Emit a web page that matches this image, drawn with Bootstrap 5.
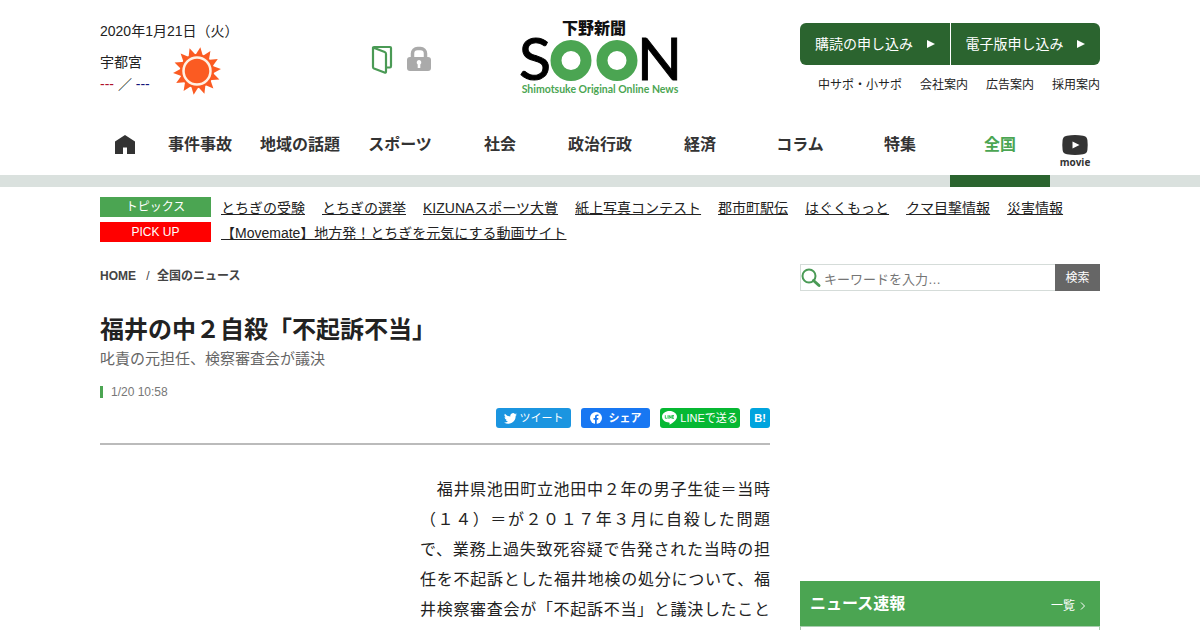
<!DOCTYPE html>
<html lang="ja">
<head>
<meta charset="utf-8">
<meta name="viewport" content="width=device-width, initial-scale=1">
<title>福井の中２自殺「不起訴不当」｜下野新聞 SOON</title>
<link href="https://cdn.jsdelivr.net/npm/bootstrap@5.3.0/dist/css/bootstrap.min.css" rel="stylesheet">
<style>
  body { font-family: "Liberation Sans", "Noto Sans CJK JP", sans-serif; font-size: 14px; line-height: 20px; color: #222; }
  a { color: inherit; }
  svg { display: block; overflow: visible; }
  .page-wrap { max-width: 1000px; margin-inline: auto; }
  .fs-12 { font-size: 12px; }
  .top-grid { display: grid; grid-template-columns: 1fr auto 1fr; padding-top: 21px; min-height: 120px; }
  .weather { margin-top: 5px; gap: 22px; }
  .weather .place { line-height: 22px; padding-top: 5px; }
  .hi { color: #b0122b; } .lo { color: #14147a; }
  .tool-icons { gap: 14px; margin: 24px 89px 0 0; }
  .apply { width: 300px; border-radius: 6px; overflow: hidden; background: #2b642f; margin-top: 2px; }
  .apply a { flex: 1 1 0; height: 42px; color: #fff; padding: 0 15px; }
  .apply a:first-child { border-right: 1px solid #fff; }
  .sub-links { gap: 18px; margin-top: 10px; }
  .gnav { border-bottom: 12px solid #dae1de; }
  .gnav-row a { height: 67px; margin-bottom: -12px; padding-top: 15px; font-size: 16px; font-weight: 700; text-align: center; color: #333; text-decoration: none; flex: 2 1 0; }
  .gnav-row .side { flex: 1 1 0; display: flex; flex-direction: column; align-items: center; }
  .gnav-row .current { color: #4ba552; border-bottom: 12px solid #2b642f; }
  .gnav-row .movie { font: 700 10px/12px "Open Sans", sans-serif; gap: 1px; }
  .topics { padding-top: 10px; }
  .topic-row { gap: 10px; }
  .topic-tag { width: 111px; font-size: 12px; line-height: 19px; padding-top: 1px; text-align: center; color: #fff; background: #4ba552; flex: none; align-self: flex-start; }
  .topic-tag.pick { background: #f00; }
  .topic-links { column-gap: 17px; padding-top: 1px; }
  .main-grid { display: grid; grid-template-columns: minmax(0, 1fr) 300px; column-gap: 30px; margin-top: 21px; }
  .crumbs { font-size: 12px; line-height: 24px; font-weight: 700; color: #444; }
  .crumbs span { padding: 0 4px 0 7px; }
  h1 { font-size: 24px; line-height: 30px; font-weight: 700; margin: 27px 0 0; }
  .deck { font-size: 15px; line-height: 28px; color: #666; margin: 0; }
  .stamp { font-size: 12px; line-height: 12px; color: #777; border-left: 3px solid #4ba552; padding-left: 8px; margin-top: 13px; }
  .shares { gap: 10px; margin-top: 10px; padding-bottom: 15px; border-bottom: 2px solid #bbb; }
  .shares button { height: 20px; border: 0; border-radius: 3px; color: #fff; font-size: 11px; line-height: 20px; padding: 0; display: flex; align-items: center; justify-content: center; gap: 3px; }
  .tw { width: 75px; background: #1b95e0; } .fb { width: 69px; background: #1877f2; font-weight: 700; }
  .ln { width: 80px; background: #06b833; } .hb { width: 20px; background: #00a4de; }
  .story { margin: 30px 0 0 320px; font-size: 16px; line-height: 30px; text-align: justify; text-align-last: justify; }
  .search { height: 27px; }
  .search-box { border: 1px solid #d5dcd9; border-right: 0; gap: 3px; }
  .search input { border: 0; outline: 0; padding: 4px 0 0; font-size: 13px; min-width: 0; }
  .search input::placeholder { color: #757575; }
  .search button { width: 45px; border: 0; padding: 0; background: #666; color: #fff; font-size: 12px; }
  .ad-slot { min-height: 290px; }
  .flash-head { background: #4ba552; color: #fff; height: 45px; padding: 0 14px 0 10px; }
  .flash-head h2 { font-size: 16px; line-height: 20px; font-weight: 700; margin: 0; }
  .flash-body { border: 1px solid #a9cdb0; border-bottom: 0; height: 4px; }
</style>
</head>
<body>
<header>
  <div class="page-wrap top-grid">
    <div class="d-flex justify-content-between align-items-start">
      <div>
        <div>2020年1月21日（火）</div>
        <div class="weather d-flex">
          <div class="place">宇都宮<br><span class="hi">---</span> ／ <span class="lo">---</span></div>
          <svg width="50" height="50" viewBox="0 0 50 50" fill="#fb5b22" role="img" aria-label="晴れ">
            <defs><path id="ray" d="M25 1l4.500 10h-9z"/></defs>
            <circle cx="25" cy="25" r="17"/>
            <use href="#ray" transform="rotate(8 25 25)"/><use href="#ray" transform="rotate(34 25 25)"/><use href="#ray" transform="rotate(60 25 25)"/><use href="#ray" transform="rotate(85 25 25)"/><use href="#ray" transform="rotate(111 25 25)"/><use href="#ray" transform="rotate(137 25 25)"/><use href="#ray" transform="rotate(162 25 25)"/><use href="#ray" transform="rotate(188 25 25)"/><use href="#ray" transform="rotate(214 25 25)"/><use href="#ray" transform="rotate(240 25 25)"/><use href="#ray" transform="rotate(265 25 25)"/><use href="#ray" transform="rotate(291 25 25)"/><use href="#ray" transform="rotate(317 25 25)"/><use href="#ray" transform="rotate(342 25 25)"/>
            <circle cx="25" cy="25" r="13.500" stroke="#fff1e4" stroke-width="2.500"/>
          </svg>
        </div>
      </div>
      <div class="tool-icons d-flex">
        <a href="#" aria-label="紙面"><svg width="22" height="30" viewBox="0 0 22 30" fill="none" stroke="#4a9a55" stroke-width="2.200" stroke-linejoin="round"><path d="M2 2.500Q2 2 3 2h16q1 0 1 1v18q0 1.500-1 1.500h-4M2 2.500V22q0 1 1 1.500l10.500 4q1.500.5 1.500-1V9q0-1.500-1.300-2L2 2.500"/></svg></a>
        <a href="#" aria-label="ログイン"><svg width="24" height="26" viewBox="0 0 24 26"><path d="M5.500 13V8.500a5 5 0 0 1 5-5h3a5 5 0 0 1 5 5V13" fill="none" stroke="#aaa" stroke-width="3.500"/><rect y="12" width="24" height="14" rx="3" fill="#aaa"/><path fill="#fff" d="M12 15a2.500 2.500 0 0 1 1.300 4.500V23h-2.600v-3.500A2.500 2.500 0 0 1 12 15z"/></svg></a>
      </div>
    </div>
    <a href="#" aria-label="下野新聞 SOON">
      <svg width="160" height="78" viewBox="0 0 160 78">
        <text x="74" y="13" text-anchor="middle" font-family="Noto Sans CJK JP" font-weight="900" font-size="16" fill="#111">下野新聞</text>
        <text x="-1" y="59" font-family="Lato" font-size="59" font-weight="400" stroke="#000" stroke-width="1">S</text>
        <circle cx="51" cy="39.500" r="15" fill="none" stroke="#4ba552" stroke-width="11"/>
        <circle cx="97" cy="39.500" r="15" fill="none" stroke="#4ba552" stroke-width="11"/>
        <text x="117" y="59" font-family="Lato" font-size="59" font-weight="400" stroke="#000" stroke-width="1">N</text>
        <text x="80" y="72" text-anchor="middle" font-family="Lato" font-weight="700" font-size="10.500" fill="#4ba552">Shimotsuke Original Online News</text>
      </svg>
    </a>
    <div class="d-flex flex-column align-items-end">
      <div class="apply d-flex">
        <a href="#" class="d-flex align-items-center justify-content-between text-decoration-none">購読の申し込み<svg width="8" height="8" viewBox="0 0 8 8"><path d="M0 0l8 4-8 4z" fill="#fff"/></svg></a>
        <a href="#" class="d-flex align-items-center justify-content-between text-decoration-none">電子版申し込み<svg width="8" height="8" viewBox="0 0 8 8"><path d="M0 0l8 4-8 4z" fill="#fff"/></svg></a>
      </div>
      <div class="sub-links fs-12 d-flex">
        <a href="#" class="text-decoration-none">中サポ・小サポ</a><a href="#" class="text-decoration-none">会社案内</a><a href="#" class="text-decoration-none">広告案内</a><a href="#" class="text-decoration-none">採用案内</a>
      </div>
    </div>
  </div>
  <nav class="gnav">
    <div class="page-wrap gnav-row d-flex">
      <a href="#" class="side" aria-label="ホーム"><svg width="20" height="19" viewBox="0 0 20 19"><path d="M10 0l10 6.500V19h-8v-6.500H8V19H0V6.500z" fill="#333"/></svg></a>
      <a href="#">事件事故</a><a href="#">地域の話題</a><a href="#">スポーツ</a><a href="#">社会</a><a href="#">政治行政</a><a href="#">経済</a><a href="#">コラム</a><a href="#">特集</a><a href="#" class="current" aria-current="page">全国</a>
      <a href="#" class="side movie"><svg width="26" height="20" viewBox="0 0 26 20"><path d="M5 .7Q13-.5 21 .7q4 .6 4.400 4.300.6 5 0 10-.4 3.700-4.400 4.300-8 1.200-16 0Q1 18.700.6 15 0 10 .6 5 1 1.300 5 .7z" fill="#333"/><path d="M10.500 6.500l7 3.500-7 3.500z" fill="#fff"/></svg><span>movie</span></a>
    </div>
  </nav>
</header>

<div class="page-wrap topics">
  <div class="topic-row d-flex">
    <div class="topic-tag">トピックス</div>
    <div class="topic-links d-flex flex-wrap"><a href="#">とちぎの受験</a><a href="#">とちぎの選挙</a><a href="#">KIZUNAスポーツ大賞</a><a href="#">紙上写真コンテスト</a><a href="#">郡市町駅伝</a><a href="#">はぐくもっと</a><a href="#">クマ目撃情報</a><a href="#">災害情報</a></div>
  </div>
  <div class="topic-row d-flex mt-1">
    <div class="topic-tag pick">PICK UP</div>
    <div class="topic-links d-flex"><a href="#">【Movemate】地方発！とちぎを元気にする動画サイト</a></div>
  </div>

  <div class="main-grid">
    <main>
      <nav class="crumbs" aria-label="パンくず"><a href="#" class="text-decoration-none">HOME</a><span class="fw-normal"> / </span><a href="#" class="text-decoration-none">全国のニュース</a></nav>
      <h1>福井の中２自殺「不起訴不当」</h1>
      <p class="deck">叱責の元担任、検察審査会が議決</p>
      <div class="stamp">1/20 10:58</div>
      <div class="shares d-flex justify-content-end">
        <button type="button" class="tw"><svg width="13" height="11" viewBox="0 0 24 20"><path fill="#fff" d="M24 2.400a10 10 0 0 1-2.800.8A5 5 0 0 0 23.300.5a10 10 0 0 1-3.100 1.200 4.900 4.900 0 0 0-8.400 4.500A14 14 0 0 1 1.700 1a4.900 4.900 0 0 0 1.500 6.600A5 5 0 0 1 1 7a4.900 4.900 0 0 0 4 4.900 5 5 0 0 1-2.300.1 4.900 4.900 0 0 0 4.600 3.400A10 10 0 0 1 0 17.400 14 14 0 0 0 21.500 4.900 10 10 0 0 0 24 2.400z"/></svg>ツイート</button>
        <button type="button" class="fb"><svg class="me-1" width="12" height="12" viewBox="0 0 24 24"><circle cx="12" cy="12" r="12" fill="#fff"/><path fill="#1877f2" d="M10 24v-8.500H7V12h3V9.500C10 6.500 11.800 5 14.400 5q1.300 0 2.600.2v3h-1.500c-1.500 0-2 .9-2 1.800v2h3.300l-.5 3.500h-2.800V24z"/></svg>シェア</button>
        <button type="button" class="ln"><svg width="15" height="14" viewBox="0 0 16 15"><path fill="#fff" d="M8 0c4.400 0 8 2.700 8 6.200 0 3.300-4.500 6.500-8 8.600.3-1.300.2-2.300-.4-2.400C3.300 12.100 0 9.500 0 6.200 0 2.700 3.600 0 8 0z"/><path d="M3.500 4.500v3.300h1.700M6.400 4.500v3.800M7.700 8.300V4.800l2 3V4.500M12.800 4.800h-1.900v3.100h1.900M11 6.300h1.700" fill="none" stroke="#06b833" stroke-width=".9"/></svg>LINEで送る</button>
        <button type="button" class="hb fw-bold">B!</button>
      </div>
      <p class="story">　福井県池田町立池田中２年の男子生徒＝当時（１４）＝が２０１７年３月に自殺した問題で、業務上過失致死容疑で告発された当時の担任を不起訴とした福井地検の処分について、福井検察審査会が「不起訴不当」と議決したこと</p>
    </main>
    <aside>
      <form class="search d-flex" role="search">
        <div class="search-box d-flex align-items-center flex-fill">
          <svg width="20" height="20" viewBox="0 0 20 20" fill="none" stroke="#4a9a55"><circle cx="8" cy="8" r="6.500" stroke-width="2"/><path d="M12.500 12.500l5.500 5" stroke-width="3" stroke-linecap="round"/></svg>
          <input type="text" class="flex-fill" placeholder="キーワードを入力…" aria-label="キーワード">
        </div>
        <button type="button">検索</button>
      </form>
      <div class="ad-slot"></div>
      <section>
        <div class="flash-head d-flex align-items-center justify-content-between">
          <h2>ニュース速報</h2>
          <a href="#" class="fs-12 text-decoration-none d-flex align-items-center gap-1 pt-1">一覧<svg width="7" height="8" viewBox="0 0 7 8"><path d="M2 .5L5.500 4 2 7.500" fill="none" stroke="#fff"/></svg></a>
        </div>
        <div class="flash-body"></div>
      </section>
    </aside>
  </div>
</div>
<script src="https://cdn.jsdelivr.net/npm/bootstrap@5.3.0/dist/js/bootstrap.bundle.min.js"></script>
</body>
</html>
